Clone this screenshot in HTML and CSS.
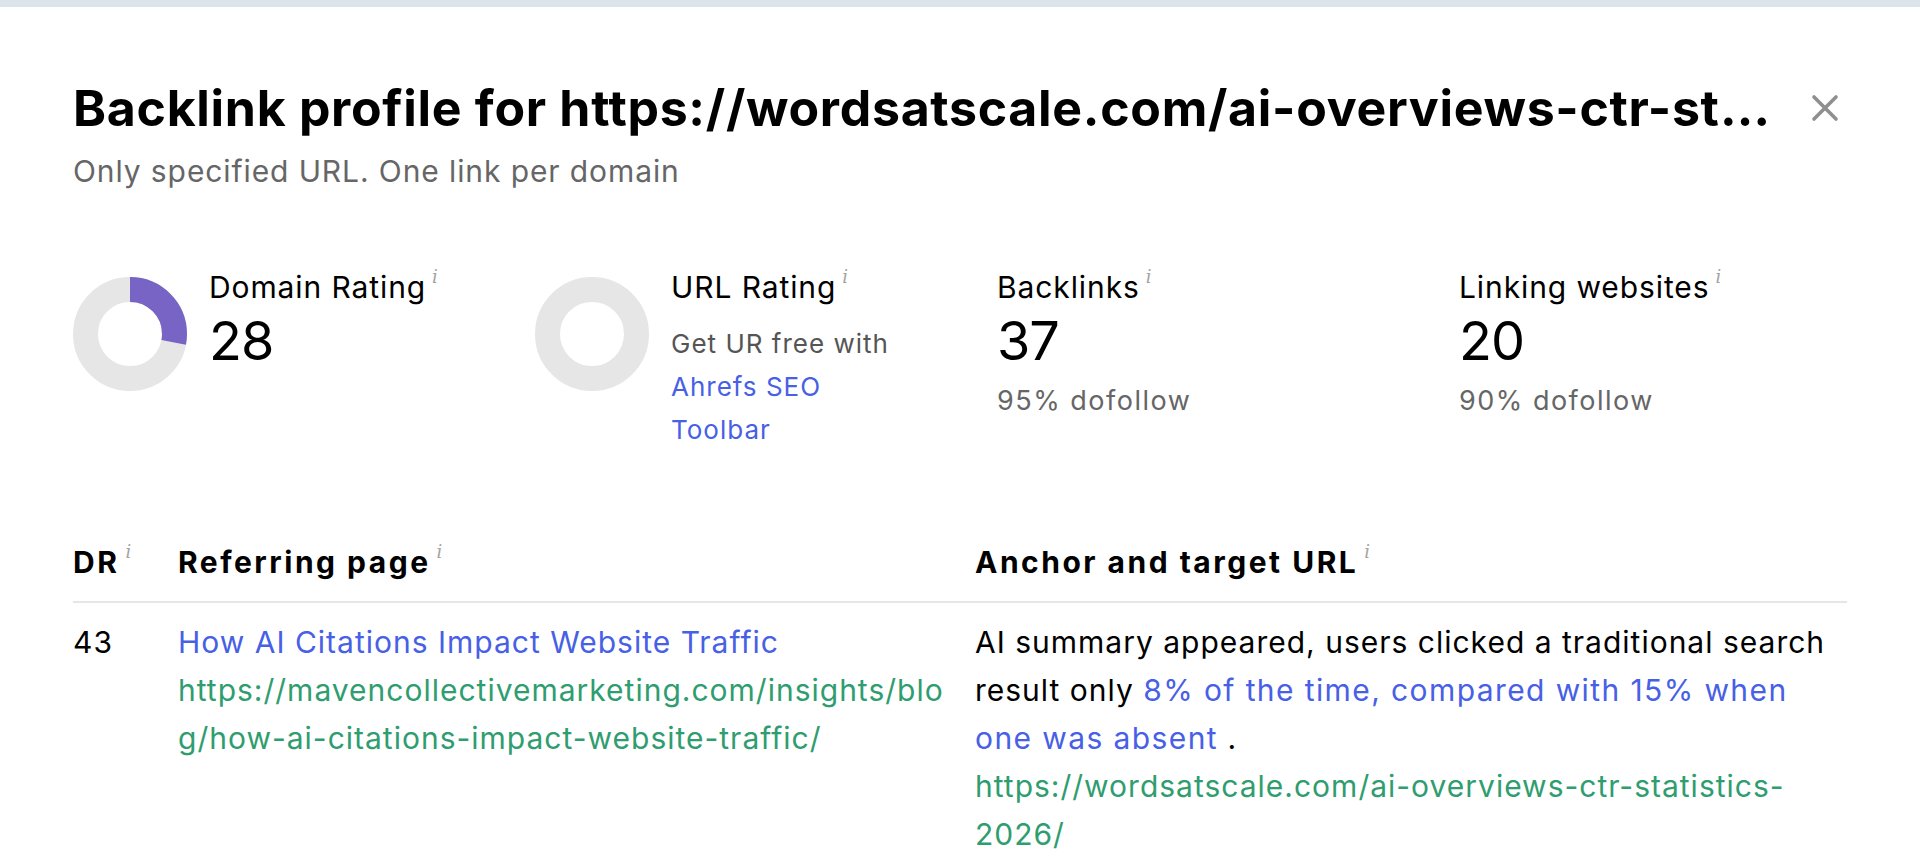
FILE: index.html
```html
<!DOCTYPE html>
<html lang="en">
    <head>
        <meta charset="UTF-8" />
        <meta name="viewport" content="width=device-width, initial-scale=1.0" />
        <title>Backlink profile</title>
        <link rel="stylesheet" href="styles.css">
    </head>
    <body>
        <div class="topbar"></div>
        <div class="modal">
            <div class="head">
                <h1 class="title">Backlink profile for https://wordsatscale.com/ai-overviews-ctr-statistics-2026/</h1>
                <button class="close" aria-label="Close">
                    <svg width="28" height="28" viewBox="0 0 28 28">
                        <path d="M3 3 L25 25 M25 3 L3 25" stroke="#8f8f8f" stroke-width="3.6" stroke-linecap="round" fill="none" />
                    </svg>
                </button>
            </div>
            <p class="subtitle">Only specified URL. One link per domain</p>

            <div class="stats">
                <div class="stat">
                    <svg class="donut" width="114" height="114" viewBox="0 0 114 114">
                        <circle cx="57" cy="57" r="44.5" fill="none" stroke="#e6e6e6" stroke-width="25" />
                        <circle cx="57" cy="57" r="44.5" fill="none" stroke="#7764c4" stroke-width="25"
                            stroke-dasharray="78.3 300" transform="rotate(-90 57 57)" />
                    </svg>
                    <div class="info">
                        <div class="label">Domain Rating<sup class="hint">i</sup></div>
                        <div class="value">28</div>
                    </div>
                </div>
                <div class="stat">
                    <svg class="donut" width="114" height="114" viewBox="0 0 114 114">
                        <circle cx="57" cy="57" r="44.5" fill="none" stroke="#e6e6e6" stroke-width="25" />
                    </svg>
                    <div class="info">
                        <div class="label">URL Rating<sup class="hint">i</sup></div>
                        <div class="promo">Get UR free with <a href="#">Ahrefs SEO Toolbar</a></div>
                    </div>
                </div>
                <div class="stat">
                    <div class="info">
                        <div class="label">Backlinks<sup class="hint">i</sup></div>
                        <div class="value">37</div>
                        <div class="note">95% dofollow</div>
                    </div>
                </div>
                <div class="stat">
                    <div class="info">
                        <div class="label">Linking websites<sup class="hint">i</sup></div>
                        <div class="value">20</div>
                        <div class="note">90% dofollow</div>
                    </div>
                </div>
            </div>

            <div class="table">
                <div class="row header">
                    <div class="cell">DR<sup class="hint">i</sup></div>
                    <div class="cell">Referring page<sup class="hint">i</sup></div>
                    <div class="cell">Anchor and target URL<sup class="hint">i</sup></div>
                </div>
                <div class="row">
                    <div class="cell">43</div>
                    <div class="cell">
                        <a class="page" href="#">How AI Citations Impact Website Traffic</a>
                        <a class="url" href="#">https://mavencollectivemarketing.com/insights/blog/how-ai-citations-impact-website-traffic/</a>
                    </div>
                    <div class="cell">
                        AI summary appeared, users clicked a traditional search result only
                        <a class="anchor" href="#">8% of the time, compared with 15% when one was absent</a> .
                        <a class="url target" href="#">https://wordsatscale.com/ai-overviews-ctr-statistics-2026/</a>
                    </div>
                </div>
            </div>
        </div>
    </body>
</html>
```

FILE: styles.css
```css
body {
    margin: 0;
    background: #fff;
    color: #000;
    font-family: Inter, "Noto Sans", sans-serif;
}
a {
    text-decoration: none;
}
.topbar {
    height: 7px;
    background: #dce4eb;
}
.modal {
    padding: 0 73px 40px;
}
.head {
    display: flex;
    align-items: center;
    gap: 30px;
    margin-top: 72px;
}
.title {
    flex: 1;
    min-width: 0;
    margin: 0;
    font-size: 50px;
    line-height: 58px;
    font-weight: 700;
    letter-spacing: 0.7px;
    white-space: nowrap;
    overflow: hidden;
    text-overflow: ellipsis;
}
.close {
    width: 44px;
    height: 44px;
    padding: 0;
    border: 0;
    background: none;
    display: flex;
    align-items: center;
    justify-content: center;
}
.subtitle {
    margin: 16px 0 0;
    font-size: 30px;
    line-height: 36px;
    letter-spacing: 0.9px;
    color: #666;
}

/* stats */
.stats {
    display: grid;
    grid-template-columns: 462px 462px 462px 1fr;
    margin-top: 80px;
}
.stat {
    display: flex;
    align-items: flex-start;
    gap: 22px;
}
.donut {
    flex: none;
    margin-top: 8px;
}
.label {
    font-size: 30px;
    line-height: 36px;
    letter-spacing: 0.9px;
}
.hint {
    font-family: "DejaVu Serif", serif;
    font-style: italic;
    font-size: 18px;
    font-weight: 400;
    letter-spacing: 0;
    color: #a3a3a3;
    margin-left: 6px;
    vertical-align: top;
    line-height: 16px;
}
.value {
    margin-top: 6px;
    font-size: 54px;
    line-height: 60px;
    letter-spacing: -1px;
}
.note {
    margin-top: 10px;
    font-size: 27px;
    line-height: 40px;
    letter-spacing: 1.5px;
    color: #666;
}
.promo {
    margin-top: 17px;
    width: 240px;
    font-size: 26px;
    line-height: 43px;
    letter-spacing: 1px;
    color: #555;
}
.promo a {
    color: #4760e6;
}

/* table */
.table {
    margin-top: 93px;
}
.row {
    display: grid;
    grid-template-columns: 105px 797px 1fr;
}
.row.header {
    font-weight: 700;
    font-size: 30px;
    line-height: 36px;
    letter-spacing: 2.5px;
    padding-bottom: 21px;
    border-bottom: 2px solid #e6e6e6;
}
.row .cell {
    padding-right: 24px;
}
.row .cell:last-child {
    padding-right: 12px;
}
.row:not(.header) {
    padding-top: 15px;
    font-size: 30px;
    line-height: 48px;
    letter-spacing: 1px;
}
.page,
.url {
    display: block;
}
.page,
.anchor {
    color: #4760e6;
}
.anchor {
    letter-spacing: 1.4px;
}
.url {
    color: #2f9d6f;
    word-break: break-all;
}
.url.target {
    word-break: normal;
}
```
